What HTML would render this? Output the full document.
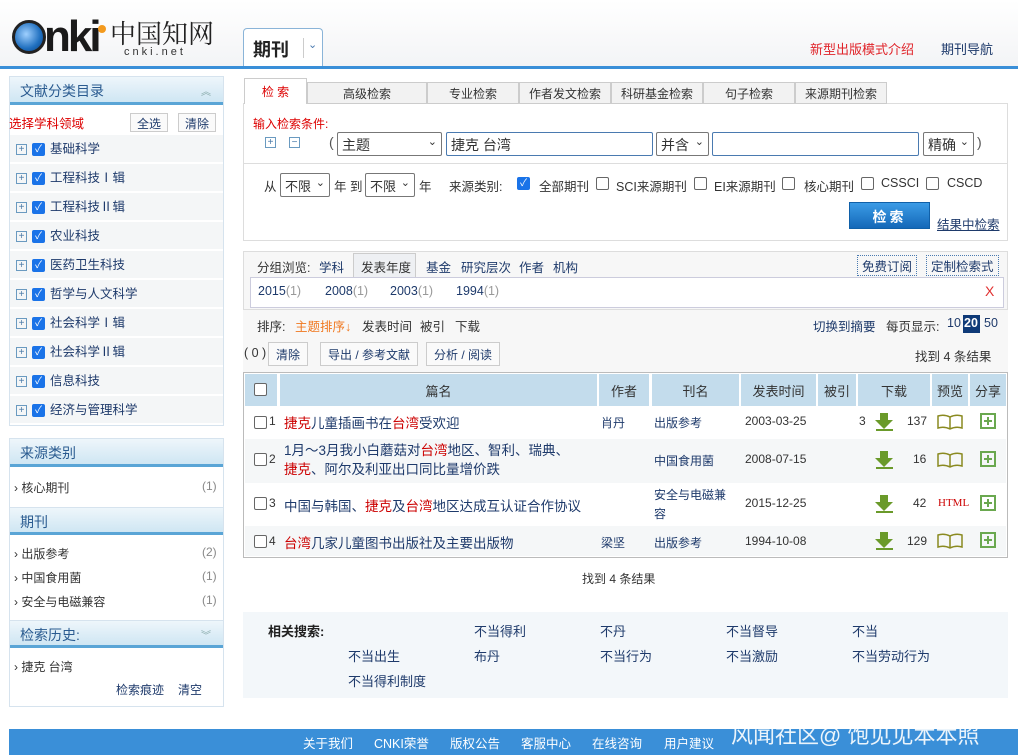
<!DOCTYPE html>
<html><head><meta charset="utf-8"><style>
*{margin:0;padding:0;box-sizing:border-box}
body{width:1018px;height:755px;position:relative;overflow:hidden;background:#fff;font-family:"Liberation Sans","Noto Sans CJK SC",sans-serif;font-size:12px;color:#333}
.a{position:absolute;white-space:nowrap}
.hdr{left:0;top:0;width:1018px;height:66px;background:linear-gradient(#fff,#f3f4f6)}
.bl{left:0;top:66px;width:1018px;height:3px;background:#3a8fd8}
.panel{position:absolute;left:9px;width:215px;border:1px solid #d6e3ee;background:#fff}
.ph{position:absolute;left:0;width:213px;height:28px;background:linear-gradient(#eef6fb,#cfe6f3);border-bottom:3px solid #5aa5d6;color:#2a5b90;font-size:14px;padding:4px 0 0 10px}
.cat{position:absolute;left:0;width:213px;height:27px;background:#f4f6f7;font-size:12.5px;color:#1e3a6b;padding:3px 0 0 6px}
.pl{display:inline-block;width:11px;height:11px;border:1px solid #6a9ac0;color:#4a7aa8;font-size:10px;line-height:9px;text-align:center;vertical-align:middle;margin-right:5px}
.cb{display:inline-block;width:13px;height:13px;background:#1a73e8;border-radius:2px;color:#fff;font-size:10px;line-height:13px;text-align:center;vertical-align:middle;margin-right:5px}
.cbe{display:inline-block;width:13px;height:13px;border:1px solid #666;border-radius:2px;background:#fff;vertical-align:middle}
.tab{position:absolute;top:82px;height:22px;background:#f2f2f2;border:1px solid #ccc;font-size:12px;text-align:center;padding-top:2px;color:#333}
.sel{position:absolute;height:24px;border:1px solid #777;border-radius:2px;background:#fff;font-size:14px;padding:2px 4px}
.btn{position:absolute;height:22px;border:1px solid #ccc;background:#fafafa;padding:3px 7px;font-size:12px;color:#1e3a6b}
.lk{color:#1e3a6b}
.r{color:#c00}
</style></head><body>
<div class="a hdr"></div>
<div class="a bl"></div>
<div class="a" style="left:12px;top:20px;width:34px;height:34px;border-radius:50%;background:radial-gradient(circle at 40% 40%,#9fd0ff,#1f6fbf 60%,#0b3d7a);border:3px solid #222"></div>
<div class="a" style="left:44px;top:12px;font:bold 44px 'Liberation Sans',sans-serif;color:#1a1a1a;letter-spacing:-3px">nki</div>
<div class="a" style="left:98px;top:25px;width:8px;height:8px;border-radius:50%;background:#f39a1e"></div>
<div class="a" style="left:110px;top:14px;font-size:26px;color:#222;font-family:'Noto Serif CJK SC',serif">中国知网</div>
<div class="a" style="left:124px;top:46px;font-size:11px;letter-spacing:3px;color:#333">cnki.net</div>
<div class="a" style="left:243px;top:28px;width:80px;height:38px;border:1px solid #8ab4d8;border-bottom:none;border-radius:4px 4px 0 0;background:#fff"></div>
<div class="a" style="left:253px;top:36px;font-size:18px;font-weight:bold;color:#222">期刊</div>
<div class="a" style="left:303px;top:38px;width:1px;height:20px;background:#ccc"></div>
<div class="a" style="left:308px;top:38px;font-size:11px;color:#4a7ab0">&#8964;</div>
<div class="a r" style="left:810px;top:39px;font-size:13px;color:#e0242a">新型出版模式介绍</div>
<div class="a" style="left:941px;top:39px;font-size:13px;color:#1e3a6b">期刊导航</div>

<div class="panel" style="top:76px;height:350px">
 <div class="ph" style="top:0">文献分类目录<span style="position:absolute;right:12px;top:6px;font-size:10px;color:#8aa">︽</span></div>
 <div class="a r" style="left:-1px;top:36px;font-size:12.5px;color:#d00">选择学科领域</div>
 <div class="btn" style="left:120px;top:36px;height:19px;padding:1px 6px">全选</div>
 <div class="btn" style="left:168px;top:36px;height:19px;padding:1px 6px">清除</div>
 <div class="cat" style="top:58px"><span class="pl">+</span><span class="cb">✓</span>基础科学</div>
 <div class="cat" style="top:87px"><span class="pl">+</span><span class="cb">✓</span>工程科技Ⅰ辑</div>
 <div class="cat" style="top:116px"><span class="pl">+</span><span class="cb">✓</span>工程科技Ⅱ辑</div>
 <div class="cat" style="top:145px"><span class="pl">+</span><span class="cb">✓</span>农业科技</div>
 <div class="cat" style="top:174px"><span class="pl">+</span><span class="cb">✓</span>医药卫生科技</div>
 <div class="cat" style="top:203px"><span class="pl">+</span><span class="cb">✓</span>哲学与人文科学</div>
 <div class="cat" style="top:232px"><span class="pl">+</span><span class="cb">✓</span>社会科学Ⅰ辑</div>
 <div class="cat" style="top:261px"><span class="pl">+</span><span class="cb">✓</span>社会科学Ⅱ辑</div>
 <div class="cat" style="top:290px"><span class="pl">+</span><span class="cb">✓</span>信息科技</div>
 <div class="cat" style="top:319px"><span class="pl">+</span><span class="cb">✓</span>经济与管理科学</div>
</div>
<div class="panel" style="top:438px;height:269px">
 <div class="ph" style="top:0">来源类别</div>
 <div class="a" style="left:4px;top:40px;font-size:12px">› 核心期刊</div><div class="a" style="left:192px;top:40px;color:#888">(1)</div>
 <div class="ph" style="top:68px;border-top:1px solid #d6e3ee">期刊</div>
 <div class="a" style="left:4px;top:106px">› 出版参考</div><div class="a" style="left:192px;top:106px;color:#888">(2)</div>
 <div class="a" style="left:4px;top:130px">› 中国食用菌</div><div class="a" style="left:192px;top:130px;color:#888">(1)</div>
 <div class="a" style="left:4px;top:154px">› 安全与电磁兼容</div><div class="a" style="left:192px;top:154px;color:#888">(1)</div>
 <div class="ph" style="top:181px;border-top:1px solid #d6e3ee">检索历史:<span style="position:absolute;right:12px;top:6px;font-size:10px;color:#8aa">︾</span></div>
 <div class="a" style="left:4px;top:219px">› 捷克 台湾</div>
 <div class="a" style="left:106px;top:242px;color:#1e3a6b">检索痕迹</div><div class="a" style="left:168px;top:242px;color:#1e3a6b">清空</div>
</div>

<div class="a" style="left:243px;top:103px;width:765px;height:138px;border:1px solid #ddd"></div>
<div class="tab" style="left:244px;top:78px;height:26px;width:63px;background:#fff;border-bottom:none;color:#d00;padding-top:4px">检 索</div>
<div class="tab" style="left:307px;width:120px">高级检索</div>
<div class="tab" style="left:427px;width:92px">专业检索</div>
<div class="tab" style="left:519px;width:92px">作者发文检索</div>
<div class="tab" style="left:611px;width:92px">科研基金检索</div>
<div class="tab" style="left:703px;width:92px">句子检索</div>
<div class="tab" style="left:795px;width:92px">来源期刊检索</div>
<div class="a" style="left:253px;top:115px;color:#d00">输入检索条件:</div>
<div class="a pl" style="left:265px;top:137px">+</div>
<div class="a pl" style="left:289px;top:137px">−</div>
<div class="a" style="left:329px;top:134px;font-size:14px;color:#555">(</div>
<div class="sel" style="left:337px;top:132px;width:105px">主题<span style="float:right;font-size:11px">&#8964;</span></div>
<div class="sel" style="left:446px;top:132px;width:207px;border-color:#4a7ab0">捷克 台湾</div>
<div class="sel" style="left:656px;top:132px;width:53px">并含<span style="float:right;font-size:11px">&#8964;</span></div>
<div class="sel" style="left:712px;top:132px;width:207px;border-color:#4a7ab0"></div>
<div class="sel" style="left:923px;top:132px;width:51px">精确<span style="float:right;font-size:11px">&#8964;</span></div>
<div class="a" style="left:977px;top:134px;font-size:14px;color:#555">)</div>
<div class="a" style="left:244px;top:163px;width:763px;height:1px;background:#ddd"></div>
<div class="a" style="left:264px;top:176px;font-size:12.5px">从</div>
<div class="sel" style="left:280px;top:173px;width:50px;font-size:13px">不限<span style="float:right;font-size:11px">&#8964;</span></div>
<div class="a" style="left:334px;top:176px;font-size:12.5px">年 到</div>
<div class="sel" style="left:365px;top:173px;width:50px;font-size:13px">不限<span style="float:right;font-size:11px">&#8964;</span></div>
<div class="a" style="left:419px;top:176px;font-size:12.5px">年</div>
<div class="a" style="left:449px;top:176px;font-size:12.5px">来源类别:</div>
<div class="a" style="left:517px;top:176px"><span class="cb">✓</span></div>
<div class="a" style="left:539px;top:176px;font-size:12.5px">全部期刊</div>
<div class="a" style="left:596px;top:176px"><span class="cbe"></span></div>
<div class="a" style="left:616px;top:176px;font-size:12.5px">SCI来源期刊</div>
<div class="a" style="left:694px;top:176px"><span class="cbe"></span></div>
<div class="a" style="left:714px;top:176px;font-size:12.5px">EI来源期刊</div>
<div class="a" style="left:782px;top:176px"><span class="cbe"></span></div>
<div class="a" style="left:804px;top:176px;font-size:12.5px">核心期刊</div>
<div class="a" style="left:861px;top:176px"><span class="cbe"></span></div>
<div class="a" style="left:881px;top:176px;font-size:12.5px">CSSCI</div>
<div class="a" style="left:926px;top:176px"><span class="cbe"></span></div>
<div class="a" style="left:947px;top:176px;font-size:12.5px">CSCD</div>
<div class="a" style="left:849px;top:202px;width:81px;height:27px;background:linear-gradient(#3b9be6,#1468b8);border:1px solid #1060a8;color:#fff;font-size:14px;font-weight:bold;text-align:center;padding-top:4px;letter-spacing:3px">检索</div>
<div class="a" style="left:937px;top:214px;color:#1e3a6b;text-decoration:underline;font-size:12.5px">结果中检索</div>

<div class="a" style="left:243px;top:251px;width:765px;height:59px;border:1px solid #ddd;background:#f7f7f7"></div>
<div class="a" style="left:257px;top:257px;font-size:12.5px">分组浏览:</div>
<div class="a lk" style="left:319px;top:257px;font-size:12.5px">学科</div>
<div class="a" style="left:353px;top:253px;width:63px;height:25px;background:#eef0f3;border:1px solid #ccc;border-bottom:none"></div>
<div class="a" style="left:361px;top:257px;font-size:12.5px">发表年度</div>
<div class="a lk" style="left:426px;top:257px;font-size:12.5px">基金</div>
<div class="a lk" style="left:461px;top:257px;font-size:12.5px">研究层次</div>
<div class="a lk" style="left:519px;top:257px;font-size:12.5px">作者</div>
<div class="a lk" style="left:553px;top:257px;font-size:12.5px">机构</div>
<div class="a lk" style="left:857px;top:255px;border:1px dotted #4a7ab0;padding:0 4px;font-size:12.5px">免费订阅</div>
<div class="a lk" style="left:926px;top:255px;border:1px dotted #4a7ab0;padding:0 4px;font-size:12.5px">定制检索式</div>
<div class="a" style="left:250px;top:277px;width:754px;height:31px;background:#fff;border:1px solid #ccd"></div>
<div class="a lk" style="left:258px;top:284px;font-size:12.5px">2015<span style="color:#999">(1)</span></div>
<div class="a lk" style="left:325px;top:284px;font-size:12.5px">2008<span style="color:#999">(1)</span></div>
<div class="a lk" style="left:390px;top:284px;font-size:12.5px">2003<span style="color:#999">(1)</span></div>
<div class="a lk" style="left:456px;top:284px;font-size:12.5px">1994<span style="color:#999">(1)</span></div>
<div class="a" style="left:985px;top:283px;color:#e03030;font-size:14px">X</div>
<div class="a" style="left:243px;top:310px;width:765px;height:62px;background:#f7f7f7"></div>
<div class="a" style="left:257px;top:316px;font-size:12.5px">排序:</div>
<div class="a" style="left:295px;top:316px;font-size:12.5px;color:#f07820">主题排序↓</div>
<div class="a" style="left:362px;top:316px;font-size:12.5px">发表时间</div>
<div class="a" style="left:420px;top:316px;font-size:12.5px">被引</div>
<div class="a" style="left:455px;top:316px;font-size:12.5px">下载</div>
<div class="a lk" style="left:813px;top:316px;font-size:12.5px">切换到摘要</div>
<div class="a" style="left:886px;top:316px;font-size:12.5px">每页显示:</div>
<div class="a lk" style="left:947px;top:316px;font-size:12.5px">10</div>
<div class="a" style="left:963px;top:315px;width:17px;height:18px;background:#0f3a78;color:#fff;font-size:12.5px;font-weight:bold;padding:1px 1px">20</div>
<div class="a lk" style="left:984px;top:316px;font-size:12.5px">50</div>
<div class="a" style="left:244px;top:346px;font-size:12.5px">( 0 )</div>
<div class="btn" style="left:268px;top:342px;height:24px">清除</div>
<div class="btn" style="left:320px;top:342px;height:24px">导出 / 参考文献</div>
<div class="btn" style="left:426px;top:342px;height:24px">分析 / 阅读</div>
<div class="a" style="left:915px;top:346px;font-size:12.5px">找到 4 条结果</div>

<div class="a" style="left:243px;top:372px;width:765px;height:186px;border:1px solid #bbb"></div>
<div class="a" style="left:245px;top:374px;width:32px;height:32px;background:#c3dcec"></div>
<div class="a" style="left:280px;top:374px;width:317px;height:32px;background:#c3dcec;text-align:center;padding-top:7px;font-size:13px">篇名</div>
<div class="a" style="left:599px;top:374px;width:50px;height:32px;background:#c3dcec;text-align:center;padding-top:7px;font-size:13px">作者</div>
<div class="a" style="left:652px;top:374px;width:87px;height:32px;background:#c3dcec;text-align:center;padding-top:7px;font-size:13px">刊名</div>
<div class="a" style="left:741px;top:374px;width:75px;height:32px;background:#c3dcec;text-align:center;padding-top:7px;font-size:13px">发表时间</div>
<div class="a" style="left:818px;top:374px;width:38px;height:32px;background:#c3dcec;text-align:center;padding-top:7px;font-size:13px">被引</div>
<div class="a" style="left:858px;top:374px;width:72px;height:32px;background:#c3dcec;text-align:center;padding-top:7px;font-size:13px">下载</div>
<div class="a" style="left:932px;top:374px;width:36px;height:32px;background:#c3dcec;text-align:center;padding-top:7px;font-size:13px">预览</div>
<div class="a" style="left:970px;top:374px;width:36px;height:32px;background:#c3dcec;text-align:center;padding-top:7px;font-size:13px">分享</div>
<div class="a cbe" style="left:254px;top:383px"></div>
<div class="a" style="left:245px;top:439px;width:761px;height:44px;background:#f5f7f8"></div>
<div class="a" style="left:245px;top:526px;width:761px;height:30px;background:#f5f7f8"></div>
<div class="a cbe" style="left:254px;top:416px"></div><div class="a" style="left:269px;top:414px;font-size:12px">1</div>
<div class="a lk" style="left:284px;top:412px;font-size:13.5px"><span class="r">捷克</span>儿童插画书在<span class="r">台湾</span>受欢迎</div>
<div class="a lk" style="left:601px;top:414px">肖丹</div>
<div class="a lk" style="left:654px;top:414px">出版参考</div>
<div class="a" style="left:745px;top:414px">2003-03-25</div>
<div class="a" style="left:859px;top:414px">3</div>
<div class="a" style="left:907px;top:414px">137</div>
<div class="a cbe" style="left:254px;top:453px"></div><div class="a" style="left:269px;top:452px">2</div>
<div class="a lk" style="left:284px;top:441px;font-size:13.5px;line-height:19px">1月～3月我小白蘑菇对<span class="r">台湾</span>地区、智利、瑞典、<br><span class="r">捷克</span>、阿尔及利亚出口同比量增价跌</div>
<div class="a lk" style="left:654px;top:452px">中国食用菌</div>
<div class="a" style="left:745px;top:452px">2008-07-15</div>
<div class="a" style="left:913px;top:452px">16</div>
<div class="a cbe" style="left:254px;top:497px"></div><div class="a" style="left:269px;top:496px">3</div>
<div class="a lk" style="left:284px;top:495px;font-size:13.5px">中国与韩国、<span class="r">捷克</span>及<span class="r">台湾</span>地区达成互认证合作协议</div>
<div class="a lk" style="left:654px;top:486px;line-height:19px">安全与电磁兼<br>容</div>
<div class="a" style="left:745px;top:496px">2015-12-25</div>
<div class="a" style="left:913px;top:496px">42</div>
<div class="a" style="left:938px;top:497px;color:#c00;font-family:'Liberation Serif',serif;font-size:11px">HTML</div>
<div class="a cbe" style="left:254px;top:535px"></div><div class="a" style="left:269px;top:534px">4</div>
<div class="a lk" style="left:284px;top:532px;font-size:13.5px"><span class="r">台湾</span>几家儿童图书出版社及主要出版物</div>
<div class="a lk" style="left:601px;top:534px">梁坚</div>
<div class="a lk" style="left:654px;top:534px">出版参考</div>
<div class="a" style="left:745px;top:534px">1994-10-08</div>
<div class="a" style="left:907px;top:534px">129</div>
<svg class="a" style="left:0;top:0" width="1018" height="755">
<g fill="#6a9a2a">
 <path d="M880 413h8v7h5l-9 9-9-9h5z"/><rect x="876" y="429" width="17" height="2"/>
 <path d="M880 451h8v7h5l-9 9-9-9h5z"/><rect x="876" y="467" width="17" height="2"/>
 <path d="M880 495h8v7h5l-9 9-9-9h5z"/><rect x="876" y="511" width="17" height="2"/>
 <path d="M880 532h8v7h5l-9 9-9-9h5z"/><rect x="876" y="548" width="17" height="2"/>
</g>
<g fill="none" stroke="#8a8a20" stroke-width="1.5">
 <path d="M938 416q6-2 12 1q6-3 12-1v12q-6-2-12 1q-6-3-12-1z M950 417v12"/>
 <path d="M938 454q6-2 12 1q6-3 12-1v12q-6-2-12 1q-6-3-12-1z M950 455v12"/>
 <path d="M938 535q6-2 12 1q6-3 12-1v12q-6-2-12 1q-6-3-12-1z M950 536v12"/>
</g>
<g fill="none" stroke="#6aa84f" stroke-width="2">
 <rect x="981" y="414" width="14" height="14"/><path d="M988 417v8M984 421h8"/>
 <rect x="981" y="452" width="14" height="14"/><path d="M988 455v8M984 459h8"/>
 <rect x="981" y="496" width="14" height="14"/><path d="M988 499v8M984 503h8"/>
 <rect x="981" y="533" width="14" height="14"/><path d="M988 536v8M984 540h8"/>
</g>
</svg>
<div class="a" style="left:582px;top:570px;font-size:12px">找到 4 条结果</div>

<div class="a" style="left:243px;top:612px;width:765px;height:86px;background:#f3f7fa"></div>
<div class="a" style="left:268px;top:621px;font-size:13px;font-weight:bold;color:#222">相关搜索:</div>
<div class="a lk" style="left:474px;top:621px;font-size:13px">不当得利</div>
<div class="a lk" style="left:600px;top:621px;font-size:13px">不丹</div>
<div class="a lk" style="left:726px;top:621px;font-size:13px">不当督导</div>
<div class="a lk" style="left:852px;top:621px;font-size:13px">不当</div>
<div class="a lk" style="left:348px;top:646px;font-size:13px">不当出生</div>
<div class="a lk" style="left:474px;top:646px;font-size:13px">布丹</div>
<div class="a lk" style="left:600px;top:646px;font-size:13px">不当行为</div>
<div class="a lk" style="left:726px;top:646px;font-size:13px">不当激励</div>
<div class="a lk" style="left:852px;top:646px;font-size:13px">不当劳动行为</div>
<div class="a lk" style="left:348px;top:671px;font-size:13px">不当得利制度</div>

<div class="a" style="left:9px;top:729px;width:1009px;height:26px;background:#3a8fd8"></div>
<div class="a" style="left:303px;top:733px;color:#fff;font-size:12.5px">关于我们</div>
<div class="a" style="left:374px;top:733px;color:#fff;font-size:12.5px">CNKI荣誉</div>
<div class="a" style="left:450px;top:733px;color:#fff;font-size:12.5px">版权公告</div>
<div class="a" style="left:521px;top:733px;color:#fff;font-size:12.5px">客服中心</div>
<div class="a" style="left:592px;top:733px;color:#fff;font-size:12.5px">在线咨询</div>
<div class="a" style="left:664px;top:733px;color:#fff;font-size:12.5px">用户建议</div>
<div class="a" style="left:731px;top:718px;color:#fff;font-size:22px;opacity:.9">风闻社区@ 饱见见本本照</div>
</body></html>
